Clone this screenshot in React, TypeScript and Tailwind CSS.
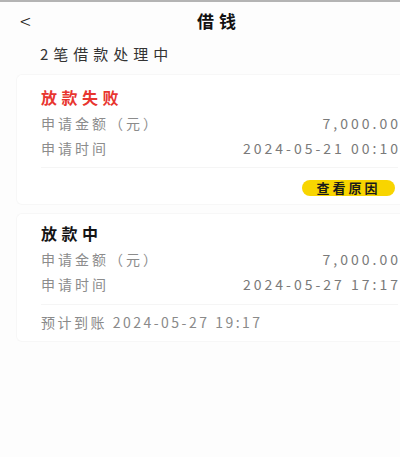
const LOANS = [
  {
    status: "放款失败",
    failed: true,
    amount: "7,000.00",
    time: "2024-05-21 00:10",
  },
  {
    status: "放款中",
    failed: false,
    amount: "7,000.00",
    time: "2024-05-27 17:17",
    eta: "2024-05-27 19:17",
  },
];

function Row({ label, value }: { label: string; value: string }) {
  return (
    <div className="flex items-center justify-between text-[14px] leading-[20px] tracking-[3px]">
      <span className="text-[#8c8c8c]">{label}</span>
      <span className="-mr-[3px] text-[#7a7a7a]">{value}</span>
    </div>
  );
}

export default function App() {
  return (
    <div className="h-[457px] w-[400px] overflow-hidden border-t-2 border-[#b4b4b4] bg-[#fdfdfd] font-['Noto_Sans_CJK_SC','Liberation_Sans',sans-serif]">
      <header className="flex h-[38px] items-center">
        <div className="w-[197px] pl-[20px] text-[20px] font-light leading-none text-[#222]">
          &lt;
        </div>
        <h1 className="text-[17px] font-bold leading-[22px] tracking-[5px] text-[#111]">
          借钱
        </h1>
      </header>

      <p className="mt-[4px] pl-[40px] text-[15px] leading-[20px] tracking-[5px] text-[#333]">
        2笔借款处理中
      </p>

      <div className="mt-[10px] flex flex-col gap-[8px]">
        {LOANS.map((loan, i) => (
          <section
            key={i}
            className="ml-[16px] rounded-l-md border border-r-0 border-[#f7f7f7] bg-white pr-[2px] pl-[24px]"
          >
            <h2
              className={
                loan.failed
                  ? "pt-[11px] text-[16px] font-bold leading-[22px] tracking-[4.5px] text-[#e8352f]"
                  : "pt-[8px] text-[16px] font-bold leading-[22px] tracking-[4.5px] text-[#141414]"
              }
            >
              {loan.status}
            </h2>
            <div className="mt-[5px] flex flex-col gap-[5px]">
              <Row label="申请金额（元）" value={loan.amount} />
              <Row label="申请时间" value={loan.time} />
            </div>
            <div
              className={
                loan.failed
                  ? "mt-[9px] h-px bg-[#f5f5f5]"
                  : "mt-[10px] h-px bg-[#f5f5f5]"
              }
            />
            {loan.failed ? (
              <div className="flex justify-end pt-[12px] pb-[8px]">
                <button
                  type="button"
                  className="mr-[3px] h-[16px] w-[93px] rounded-full bg-[#f8d500] text-[13px] font-bold leading-[16px] tracking-[3px] text-[#1a1a1a]"
                >
                  查看原因
                </button>
              </div>
            ) : (
              <p className="mt-[7px] pb-[9px] text-[14px] leading-[20px] tracking-[2.5px] text-[#8a8a8a]">
                预计到账 {loan.eta}
              </p>
            )}
          </section>
        ))}
      </div>
    </div>
  );
}
